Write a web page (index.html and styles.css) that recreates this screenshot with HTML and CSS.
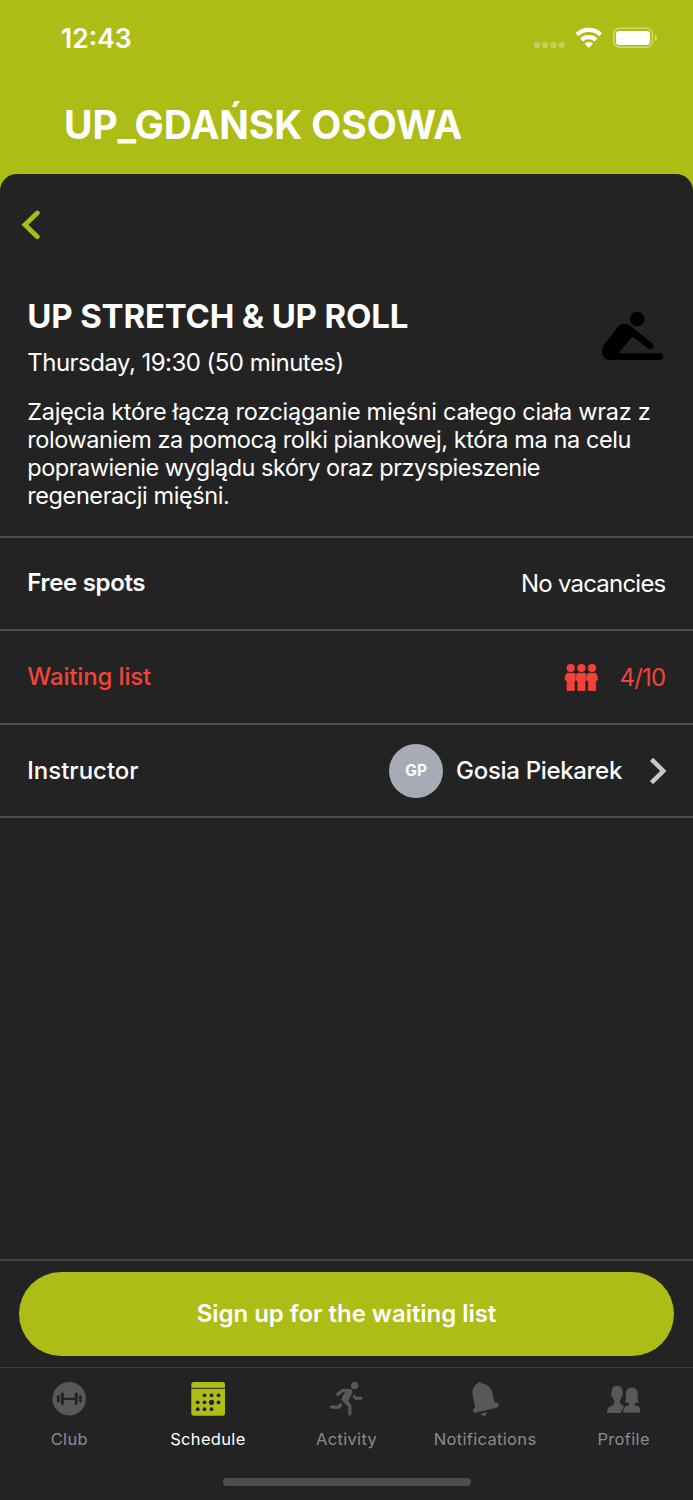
FILE: index.html
```html
<!DOCTYPE html>
<html lang="en">
<head>
<meta charset="utf-8">
<title>UP_GDAŃSK OSOWA</title>
<link rel="stylesheet" href="styles.css">
</head>
<body>
<header class="top">
  <div class="status">
    <span class="time">12:43</span>
    <svg class="status-icons" viewBox="533 24 125 28" width="125" height="28">
      <g fill="#fff" opacity=".28"><rect x="533.8" y="42" width="6" height="6" rx="2"/><rect x="542.2" y="42" width="6" height="6" rx="2"/><rect x="550.5" y="42" width="6" height="6" rx="2"/><rect x="558.8" y="42" width="6" height="6" rx="2"/></g>
      <g fill="none" stroke="#fff" stroke-width="4.300"><path d="M577 34.7a16.8 16.8 0 0 1 23.6 0"/><path d="M581.6 40a10.4 10.4 0 0 1 14.4 0"/></g>
      <path fill="#fff" d="M584.6 43.6a6 6 0 0 1 8.400 0L588.8 47.900z"/>
      <rect x="613.8" y="28.2" width="38.6" height="19" rx="5.5" fill="none" stroke="#fff" stroke-opacity=".42" stroke-width="1.5"/>
      <rect x="616" y="31" width="34" height="14" rx="3.2" fill="#fff"/>
      <path fill="#fff" opacity=".5" d="M655 34.8q1.9 1 1.9 3.1t-1.9 3.1z"/>
    </svg>
  </div>
  <h1 class="club">UP_GDAŃSK OSOWA</h1>
</header>
<main class="sheet">
  <svg class="back" viewBox="0 0 20 32" width="20" height="32"><path d="M17.300 4 5 15.800l12.300 11.900" fill="none" stroke="#adbd16" stroke-width="4.8" stroke-linecap="round"/></svg>
  <section class="intro">
    <div class="heading">
      <div>
        <h2 class="name">UP STRETCH &amp; UP ROLL</h2>
        <p class="when">Thursday, 19:30 (50 minutes)</p>
      </div>
      <svg class="stretch" viewBox="600 310 65 52" width="65" height="52">
        <circle cx="637.3" cy="319" r="7.3"/>
        <path d="M618.5 326q6-4.500 12 0L652.500 343.500q2 2 .6 4.300t-4.400 1.200L632.500 336.500 618.300 353.200H660q3.300.3 3.300 3.400t-3.300 3.500H610q-5-.6-7-4.400-2.600-6 1-11z"/>
      </svg>
    </div>
    <p class="about"><span class="l1">Zajęcia które łączą rozciąganie mięśni całego ciała wraz z</span><br><span class="l2">rolowaniem za pomocą rolki piankowej, która ma na celu</span><br><span class="l3">poprawienie wyglądu skóry oraz przyspieszenie</span><br><span class="l4">regeneracji mięśni.</span></p>
  </section>
  <section class="rows">
    <div class="row"><span class="label free">Free spots</span><span class="value vacancies">No vacancies</span></div>
    <div class="row alert"><span class="label waiting">Waiting list</span>
      <svg class="people" viewBox="565 663 35 28" width="35" height="28" fill="#f44336">
        <defs><path id="person" d="M-3-9.300H3q2 .2 2.500 2.300L6.200-2.500q-.4 1.700-2 1.700V8q0 1.300-1.300 1.300h-5.800Q-4.200 9.300-4.200 8V-.8q-1.600 0-2-1.700l.7-4.500Q-5-9.100-3-9.300z"/></defs>
        <circle cx="571.7" cy="668" r="4.100"/><circle cx="582.400" cy="668" r="4.100"/><circle cx="593" cy="668" r="4.100"/>
        <g stroke="#232323" stroke-width=".4"><use href="#person" x="571.700" y="682"/><use href="#person" x="582.400" y="682"/><use href="#person" x="593" y="682"/></g>
      </svg>
      <span class="value count">4/10</span></div>
    <div class="row"><span class="label instructor">Instructor</span><span class="avatar">GP</span><span class="trainer">Gosia Piekarek</span>
      <svg class="next" viewBox="0 0 18 28" width="18" height="28"><path d="M2.500 2.300 14.300 14 2.500 25.700" fill="none" stroke="#c8c8ca" stroke-width="4.500"/></svg></div>
  </section>
  <footer class="bottom">
    <div class="cta"><button class="signup">Sign up for the waiting list</button></div>
    <nav class="tabs">
      <div class="tab"><svg viewBox="52 1382 34 34" width="34" height="34"><circle cx="69.200" cy="1398.800" r="16.700" fill="#585858"/><g stroke="#232323" stroke-width="2.800" stroke-linecap="round"><path d="M58.300 1396.600v4.400M62.400 1393.800v10M76.200 1393.800v10M80.400 1396.600v4.400"/><path d="M62.400 1398.800h13.800" stroke-width="2.200"/></g></svg><span class="club-tab">Club</span></div>
      <div class="tab active"><svg viewBox="190.500 1382 34 34" width="34" height="34"><rect x="190.800" y="1382" width="33.700" height="33.700" rx="2.500" fill="#adbd16"/><path d="M190.500 1388.300h34" stroke="#232323" stroke-width="1"/><g fill="#232323"><circle cx="204" cy="1395.300" r="1.900"/><circle cx="211" cy="1395.300" r="1.900"/><circle cx="218" cy="1395.300" r="1.900"/><circle cx="197.200" cy="1402.300" r="1.900"/><circle cx="204" cy="1402.300" r="1.900"/><circle cx="211" cy="1402.300" r="2.600"/><circle cx="218" cy="1402.300" r="1.900"/><circle cx="197.200" cy="1409.200" r="1.900"/><circle cx="204" cy="1409.200" r="1.900"/><circle cx="211" cy="1409.200" r="1.900"/></g></svg><span class="schedule-tab">Schedule</span></div>
      <div class="tab"><svg viewBox="330 1382 34 34" width="34" height="34" fill="#585858"><circle cx="355.500" cy="1385.500" r="3.700"/><path d="M343 1389h7.500q3.200.4 3 3.500l-4.300 8.500 3.200 4 .2 9q-.3 1.700-1.800 1.600t-1.500-1.700l-.3-7.400-5.800-5.500q-1.300-1.600-.4-3.200l3.300-6H344.300l-4.500 4q-1.800.7-2.500-.7-.3-1 .3-1.800z"/><path d="m355.300 1394.200 2 2.600h5q1.200.2 1.200 1.500t-1.200 1.400h-6.300l-2.500-3.200z"/><path d="m341.300 1402.500 2.300 2.700-3.200 3.500H332.300q-1.400-.3-1.400-1.600t1.400-1.500h6.400z"/></svg><span class="activity-tab">Activity</span></div>
      <div class="tab"><svg viewBox="468 1382 34 34" width="34" height="34" fill="#585858"><path d="M478 1383.300q.4-1.500 1.900-1.200 1.200.3 1.200 1.200 8.400.7 11 8.100l2.300 10.700 3.500.8q2.300 2.500-.6 4.600l-21.500 5.300q-3.200-.2-2.900-3.200l2.200-2.300-2.200-10.500q-2-9.600 5.100-13.500z"/><path d="M480.800 1413.600 487 1411.900q.2 3.200-2.600 4-2.600.3-3.600-2.300z"/></svg><span class="notifications-tab">Notifications</span></div>
      <div class="tab"><svg viewBox="606 1382 36 34" width="36" height="34" fill="#585858"><path d="M617 1385.800q5.700.2 5.400 6.400 1 .3.400 2.500-.3 1.900-1.400 2.400-.5 2.300-1.400 3.300v2.500l1.500 1.400q2.600.9 2.300 2.800.1 2.500-2.600 4.300l-.6 1.600H607q0-3.500 1.200-5.300 1-1.300 4.900-2.800l1.200-1.600v-3q-1.300-1.300-1.700-3.200-1.300-.6-1.500-3.200 0-1.300.6-1.700-.1-6.500 5.300-6.400z"/><path stroke="#232323" stroke-width=".7" d="M632 1387q5.200.2 6 6.300l.2 6.200q.2 1.500 1 2.500-1.500 1.200-4.200 1.400v1.500q5 1.200 5.400 3.300.3 2 .2 4.800H622.700q0-3.200 1-5.100 1-1.900 4.900-3v-1.500q-2.500-.2-4.200-1.400 1.200-1.800 1-3.500v-4.200q.3-7 6.600-7.300z"/></svg><span class="profile-tab">Profile</span></div>
    </nav>
    <div class="home"></div>
  </footer>
</main>
</body>
</html>
```
FILE: styles.css
```css
* { box-sizing: border-box; }
body { margin: 0; height: 1500px; display: flex; flex-direction: column; background: #adbd16; color: #fff; font-family: Inter, "Liberation Sans", sans-serif; overflow: hidden; }
h1, h2, p { margin: 0; }
svg { display: block; flex: none; }
span, h1, h2, p, button { white-space: nowrap; }
.top { height: 174px; flex: none; }
.status { display: flex; justify-content: space-between; padding: 24px 35px 0 61px; height: 76px; }
.time { font-size: 26.5px; line-height: 28px; font-weight: 600; }
.club { padding: 24px 0 0 64px; font-size: 39px; line-height: 50px; font-weight: 700; letter-spacing: -.1px; }
.sheet { flex: 1; min-height: 0; display: flex; flex-direction: column; background: #232323; border-radius: 17px 17px 0 0; }
.back { margin: 35px 0 0 20px; }
.intro { height: 294.5px; padding: 52.500px 28px 0 27.300px; flex: none; }
.heading { display: flex; justify-content: space-between; height: 104px; }
.name { font-size: 33px; line-height: 44px; font-weight: 700; letter-spacing: -.17px; }
.when { margin-top: 10.500px; font-size: 24px; line-height: 30px; letter-spacing: -.53px; }
.stretch { margin-top: 16.500px; }
.about { font-size: 23.5px; line-height: 28.1px; }
.l1 { letter-spacing: -.3px; }
.l2 { letter-spacing: -.42px; }
.l3 { letter-spacing: -.49px; }
.l4 { letter-spacing: -.42px; }
.row { height: 93.8px; border-top: 2px solid #4d4d4d; display: flex; align-items: center; padding: 0 27.500px 0 27.300px; font-size: 24px; }
.row:last-child { height: 95.400px; border-bottom: 2px solid #4d4d4d; }
.label { flex: 1; font-weight: 600; letter-spacing: -.33px; padding-bottom: 1px; }
.alert { color: #f44336; }
.waiting, .instructor { font-weight: 500; letter-spacing: -.15px; }
.instructor { letter-spacing: 0; }
.vacancies { letter-spacing: -.78px; }
.count { letter-spacing: -.75px; }
.people { margin: -1px 20px 0 0; }
.avatar { width: 54px; height: 54px; border-radius: 50%; background: #a7abb6; font-size: 15.500px; font-weight: 700; display: flex; align-items: center; justify-content: center; margin-right: 13px; }
.trainer { font-weight: 500; letter-spacing: -.32px; padding-bottom: 1px; }
.next { margin: 0 -1.500px 0 27px; }
.bottom { margin-top: auto; height: 241px; border-top: 2px solid #444; flex: none; }
.cta { padding: 11px 19px; height: 108px; }
.signup { display: block; width: 100%; height: 84px; border: 0; border-radius: 42px; background: #adbd16; color: #fff; font: 600 24px Inter, sans-serif; letter-spacing: -.04px; padding: 0 0 2px; }
.tabs { display: grid; grid-template-columns: repeat(5, 1fr); height: 110px; border-top: 1px solid #3d3d3d; margin-top: -2px; padding-top: 14px; }
.tab { display: flex; flex-direction: column; align-items: center; gap: 13px; font-size: 16.500px; line-height: 20px; color: #8b8b8b; letter-spacing: .33px; }
.active { color: #fff; }
.home { width: 248px; height: 8px; border-radius: 4px; background: #4e4e4e; margin: 1px auto 0; }
```
